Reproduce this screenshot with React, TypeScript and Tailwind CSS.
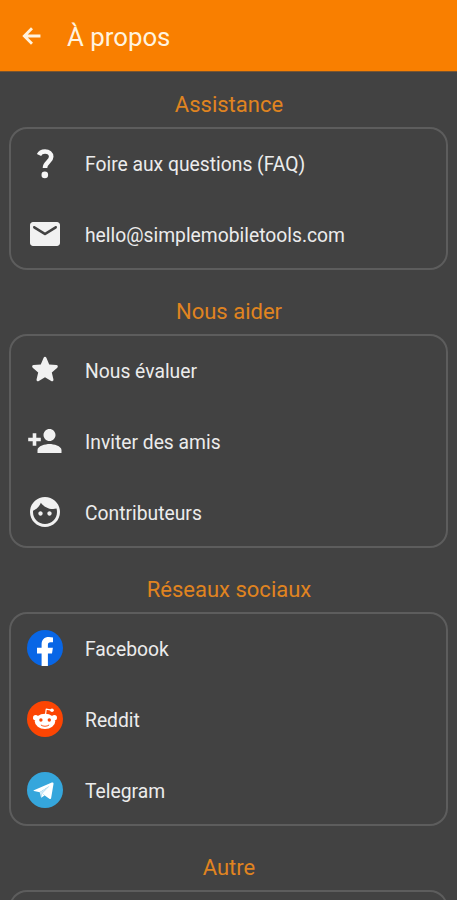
import type { ReactNode } from "react";

type Item = { label: string; icon: ReactNode };
type Section = { title: string; items: Item[] };

function Glyph({ d }: { d: string }) {
  return (
    <svg viewBox="0 0 24 24" className="h-9 w-9 fill-[#f1f1f1]">
      <path d={d} />
    </svg>
  );
}

const QuestionIcon = () => (
  <svg viewBox="0 0 36 36" className="h-9 w-9">
    <path
      d="M12 10C13 7.600 15.200 6.500 18 6.500c3.800 0 6.200 2.100 6.200 5.200 0 4.900-6.200 5.600-6.200 11.200"
      fill="none"
      stroke="#f6f6f6"
      strokeWidth="4.600"
    />
    <circle cx="17.800" cy="29.900" r="3.300" fill="#f6f6f6" />
  </svg>
);

const FacebookIcon = () => (
  <svg viewBox="0 0 36 36" className="h-9 w-9">
    <circle cx="18" cy="18" r="18" fill="#0866e6" />
    <path
      d="M14.600 36V23.500h-4.600v-5.700h4.600v-3.300c0-4.900 2.800-7.500 7.200-7.500 1.500 0 3 .2 4.200.5v4.700h-2.400c-2 0-2.700 1.100-2.700 2.700v2.900h5l-.9 5.700h-4.100V36z"
      fill="#fff"
    />
  </svg>
);

const RedditIcon = () => (
  <svg viewBox="0 0 36 36" className="h-9 w-9">
    <circle cx="18" cy="18" r="18" fill="#fc4503" />
    <path d="M18.500 14l.7-5.800 5.200 1" fill="none" stroke="#fff" strokeWidth="1.200" strokeLinejoin="round" />
    <circle cx="25" cy="9.200" r="1.800" fill="#fff" />
    <circle cx="8.700" cy="16.700" r="2.700" fill="#fff" />
    <circle cx="27.300" cy="16.700" r="2.700" fill="#fff" />
    <ellipse cx="18" cy="20.400" rx="10.200" ry="7.600" fill="#fff" />
    <circle cx="13.900" cy="19" r="1.700" fill="#fc4503" />
    <circle cx="22.300" cy="19" r="1.700" fill="#fc4503" />
    <path d="M14.200 24.200c2 1.500 5.600 1.500 7.600 0" fill="none" stroke="#fc4503" strokeWidth="0.900" strokeLinecap="round" />
  </svg>
);

const TelegramIcon = () => (
  <svg viewBox="0 0 36 36" className="h-9 w-9">
    <circle cx="18" cy="18" r="18" fill="#35a6dc" />
    <path
      d="M6.900 18.300l17.900-7.700c1.200-.5 1.900.1 1.700 1.300l-2.300 13.900c-.2 1.300-1 1.500-1.900.9l-7.300-5.200 7.400-7.600-9.700 6.300-5.700-1.200c-.7-.2-.7-.5-.1-.7z"
      fill="#fff"
    />
    <path d="M12.700 20.200l9.700-6.300-7.400 7.600-.9 4.200z" fill="#d6ecf7" />
    <path d="M14.100 25.700l.9-4.200 2.700 1.900z" fill="#fff" />
  </svg>
);

const sections: Section[] = [
  {
    title: "Assistance",
    items: [
      { label: "Foire aux questions (FAQ)", icon: <QuestionIcon /> },
      {
        label: "hello@simplemobiletools.com",
        icon: <Glyph d="M20 4H4c-1.100 0-1.990.9-1.990 2L2 18c0 1.100.9 2 2 2h16c1.100 0 2-.9 2-2V6c0-1.100-.9-2-2-2zm-.4 4.250l-7.070 4.420c-.32.2-.74.2-1.060 0L4.400 8.250c-.25-.16-.4-.43-.4-.72 0-.67.73-1.070 1.300-.72L12 11l6.700-4.190c.57-.35 1.300.05 1.300.72 0 .29-.15.56-.4.72z" />,
      },
    ],
  },
  {
    title: "Nous aider",
    items: [
      {
        label: "Nous évaluer",
        icon: <Glyph d="M12 16.900l4.150 2.510c.76.46 1.690-.22 1.490-1.080l-1.100-4.720 3.670-3.180c.67-.58.31-1.680-.57-1.750l-4.830-.41-1.890-4.460c-.34-.81-1.500-.81-1.840 0L9.190 8.260l-4.830.41c-.88.07-1.240 1.170-.57 1.750l3.670 3.180-1.100 4.720c-.2.86.73 1.540 1.490 1.080z" />,
      },
      {
        label: "Inviter des amis",
        icon: <Glyph d="M15 12c2.210 0 4-1.790 4-4s-1.790-4-4-4-4 1.790-4 4 1.790 4 4 4zm-8.800-2.200V6.800H3.800v3H.8v2.400h3v3h2.400v-3h3V9.800zM15 14c-2.670 0-8 1.340-8 4v2h16v-2c0-2.660-5.330-4-8-4z" />,
      },
      {
        label: "Contributeurs",
        icon: <Glyph d="M9 11.550c-.8 0-1.450.65-1.450 1.450s.65 1.450 1.450 1.450 1.450-.65 1.450-1.450-.65-1.450-1.450-1.450zm6 0c-.8 0-1.450.65-1.450 1.450s.65 1.450 1.450 1.450 1.450-.65 1.450-1.450-.65-1.450-1.450-1.450zM12 2C6.480 2 2 6.480 2 12s4.480 10 10 10 10-4.480 10-10S17.520 2 12 2zm0 18c-4.410 0-8-3.590-8-8 0-.29.02-.58.05-.86 2.360-1.050 4.230-2.980 5.210-5.370C11.070 8.330 14.050 10 17.420 10c.78 0 1.530-.09 2.250-.26.21.71.33 1.470.33 2.260 0 4.410-3.590 8-8 8z" />,
      },
    ],
  },
  {
    title: "Réseaux sociaux",
    items: [
      { label: "Facebook", icon: <FacebookIcon /> },
      { label: "Reddit", icon: <RedditIcon /> },
      { label: "Telegram", icon: <TelegramIcon /> },
    ],
  },
  { title: "Autre", items: [{ label: "", icon: null }] },
];

export default function App() {
  return (
    <div className="h-[900px] w-full overflow-hidden bg-[#424242] font-['Roboto',sans-serif]">
      <header className="flex h-[72px] items-center border-b border-[#7a5530] bg-[#f97f00] pl-[19px]">
        <button className="h-[26px] w-[26px]" aria-label="Retour">
          <svg viewBox="0 0 24 24" className="h-full w-full fill-none stroke-[#fff3df] stroke-[2.600]">
            <path d="M19.800 12H5.500M12 4.800L4.900 12l7.100 7.200" />
          </svg>
        </button>
        <h1 className="ml-[22px] pt-0.5 text-[25.800px] leading-8 text-[#fff3df]">À propos</h1>
      </header>

      <main className="px-[9px]">
        {sections.map((section, i) => (
          <section key={section.title} className={i === 0 ? "pt-[17px]" : "pt-[26px]"}>
            <h2 className="h-[38px] pl-px text-center text-[22px] leading-[32px] text-[#e08420]">{section.title}</h2>
            <ul className="rounded-[18px] pb-px inset-ring-2 inset-ring-[#5d5d5d]">
              {section.items.map((item) => (
                <li key={item.label} className="flex h-[71px] items-center pl-[18px]">
                  {item.icon}
                  <span className="mt-1 ml-[22px] text-[19.300px] leading-6 text-[#ececec]">{item.label}</span>
                </li>
              ))}
            </ul>
          </section>
        ))}
      </main>
    </div>
  );
}
